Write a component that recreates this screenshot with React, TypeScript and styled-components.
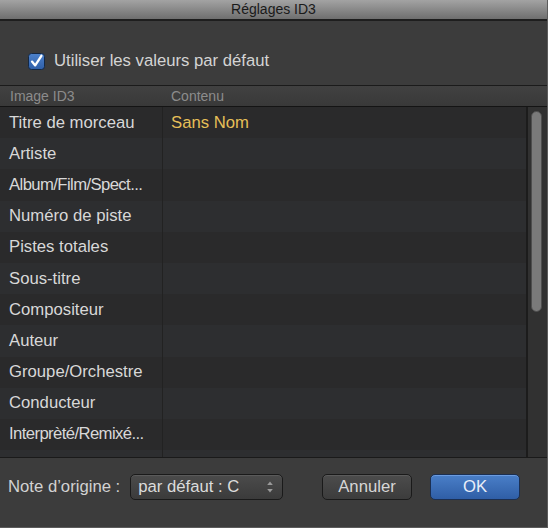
import React from "react";
import styled, { createGlobalStyle } from "styled-components";

const GlobalStyle = createGlobalStyle`
  html, body {
    margin: 0;
    padding: 0;
    background: #3c3c3c;
  }
  * {
    box-sizing: border-box;
  }
`;

const fields = [
  { label: "Titre de morceau", value: "Sans Nom" },
  { label: "Artiste", value: "" },
  { label: "Album/Film/Spect...", value: "", tight: true },
  { label: "Numéro de piste", value: "" },
  { label: "Pistes totales", value: "" },
  { label: "Sous-titre", value: "" },
  { label: "Compositeur", value: "" },
  { label: "Auteur", value: "" },
  { label: "Groupe/Orchestre", value: "" },
  { label: "Conducteur", value: "" },
  { label: "Interprèté/Remixé...", value: "", tight: true },
  { label: "", value: "" },
];

const App: React.FC = () => {
  return (
    <>
      <GlobalStyle />
      <Window>
        <TitleBar>Réglages ID3</TitleBar>
        <CheckRow>
          <CheckBox viewBox="0 0 17 17">
            <defs>
              <linearGradient id="cb" x1="0" y1="0" x2="0" y2="1">
                <stop offset="0" stopColor="#4d82cc" />
                <stop offset="1" stopColor="#2f5fa8" />
              </linearGradient>
            </defs>
            <rect x="0.5" y="0.5" width="16" height="16" rx="3" fill="url(#cb)" stroke="#142844" />
            <path
              d="M4 8.6 L7.2 12.4 L13.4 2.8"
              fill="none"
              stroke="#ffffff"
              strokeWidth="2.3"
              strokeLinecap="round"
              strokeLinejoin="round"
            />
          </CheckBox>
          <CheckLabel>Utiliser les valeurs par défaut</CheckLabel>
        </CheckRow>

        <HeaderRow>
          <HeaderCell $width={163}>Image ID3</HeaderCell>
          <HeaderCell>Contenu</HeaderCell>
        </HeaderRow>

        <TableArea>
          <Rows>
            {fields.map((f, i) => (
              <Row key={i} $odd={i % 2 === 1}>
                <NameCell $tight={!!f.tight}>{f.label}</NameCell>
                <ValueCell>{f.value}</ValueCell>
              </Row>
            ))}
          </Rows>
          <ScrollTrack>
            <ScrollThumb />
          </ScrollTrack>
        </TableArea>

        <Footer>
          <FooterLabel>Note d’origine :</FooterLabel>
          <Select>
            <span>par défaut : C</span>
            <Stepper viewBox="0 0 8 14">
              <path d="M4 1.5 L6.8 5 L1.2 5 Z" fill="#9a9a9a" />
              <path d="M4 12.5 L6.8 9 L1.2 9 Z" fill="#9a9a9a" />
            </Stepper>
          </Select>
          <Spacer />
          <Button>Annuler</Button>
          <Button $primary>OK</Button>
        </Footer>
      </Window>
    </>
  );
};

export default App;

const Window = styled.div`
  width: 548px;
  height: 528px;
  display: flex;
  flex-direction: column;
  background: #3c3c3c;
  border-right: 1px solid #5c5c5c;
  border-bottom: 1px solid #5c5c5c;
  font-family: "Liberation Sans", Arial, sans-serif;
  overflow: hidden;
`;

const TitleBar = styled.div`
  height: 21px;
  flex: none;
  display: flex;
  align-items: center;
  justify-content: center;
  padding-bottom: 2px;
  background: linear-gradient(#a3a3a3, #6f6f6f);
  border-bottom: 2px solid #1e1e1e;
  color: #1a1a1a;
  font-size: 14px;
`;

const CheckRow = styled.div`
  height: 64px;
  flex: none;
  display: flex;
  align-items: center;
  gap: 9px;
  padding: 16px 0 0 28px;
`;

const CheckBox = styled.svg`
  width: 17px;
  height: 17px;
  flex: none;
`;

const CheckLabel = styled.span`
  color: #d4d4d4;
  font-size: 16.7px;
`;

const HeaderRow = styled.div`
  height: 22px;
  flex: none;
  display: flex;
  align-items: center;
  border-top: 1px solid #1b1b1b;
  border-bottom: 1px solid #141414;
  background: linear-gradient(#414141, #393939);
`;

const HeaderCell = styled.div<{ $width?: number }>`
  width: ${(p) => (p.$width ? `${p.$width}px` : "auto")};
  flex: ${(p) => (p.$width ? "none" : "1")};
  padding-left: ${(p) => (p.$width ? "10px" : "8px")};
  color: #8c8c8c;
  font-size: 14px;
`;

const TableArea = styled.div`
  height: 351px;
  flex: none;
  display: flex;
  border-bottom: 1px solid #1a1a1a;
  overflow: hidden;
`;

const Rows = styled.div`
  flex: 1;
  display: flex;
  flex-direction: column;
  border-right: 2px solid #1c1c1c;
`;

const Row = styled.div<{ $odd: boolean }>`
  height: 31.2px;
  flex: none;
  display: flex;
  background: ${(p) => (p.$odd ? "#2d2e30" : "#2a2a2b")};
`;

const NameCell = styled.div<{ $tight: boolean }>`
  width: 163px;
  flex: none;
  display: flex;
  align-items: center;
  padding-left: 9px;
  border-right: 1px solid #222222;
  color: #d8d8d8;
  font-size: 16.7px;
  letter-spacing: ${(p) => (p.$tight ? "-0.6px" : "0")};
  white-space: nowrap;
`;

const ValueCell = styled.div`
  flex: 1;
  display: flex;
  align-items: center;
  padding-left: 8px;
  color: #e6bf58;
  font-size: 16.7px;
`;

const ScrollTrack = styled.div`
  width: 19px;
  flex: none;
  padding: 4px 0 0 3px;
  background: #313131;
`;

const ScrollThumb = styled.div`
  width: 11px;
  height: 201px;
  border-radius: 6px;
  background: #7a7a7a;
  border: 1px solid #4e4e4e;
`;

const Footer = styled.div`
  flex: 1;
  display: flex;
  align-items: flex-start;
  padding: 16px 27px 0 8px;
`;

const FooterLabel = styled.span`
  height: 26px;
  display: flex;
  align-items: center;
  margin-right: 10px;
  color: #d2d2d2;
  font-size: 16.7px;
`;

const Select = styled.div`
  width: 153px;
  height: 26px;
  display: flex;
  align-items: center;
  justify-content: space-between;
  padding: 0 8px 0 7px;
  border: 1px solid #1a1a1a;
  border-radius: 5px;
  background: linear-gradient(#4b4b4b, #3b3b3b);
  box-shadow: inset 0 1px 0 #5a5a5a;
  color: #dcdcdc;
  font-size: 16.7px;
`;

const Stepper = styled.svg`
  width: 8px;
  height: 14px;
`;

const Spacer = styled.div`
  flex: 1;
`;

const Button = styled.div<{ $primary?: boolean }>`
  width: 90px;
  height: 26px;
  margin-left: ${(p) => (p.$primary ? "18px" : "0")};
  display: flex;
  align-items: center;
  justify-content: center;
  border-radius: 5px;
  border: 1px solid ${(p) => (p.$primary ? "#1b2f52" : "#1a1a1a")};
  background: ${(p) =>
    p.$primary
      ? "linear-gradient(#4a7fc8, #2f5ea6)"
      : "linear-gradient(#4c4c4c, #3c3c3c)"};
  box-shadow: inset 0 1px 0 ${(p) => (p.$primary ? "#6b9ce0" : "#5b5b5b")};
  color: ${(p) => (p.$primary ? "#e8eef8" : "#d6d6d6")};
  font-size: 16.7px;
`;
